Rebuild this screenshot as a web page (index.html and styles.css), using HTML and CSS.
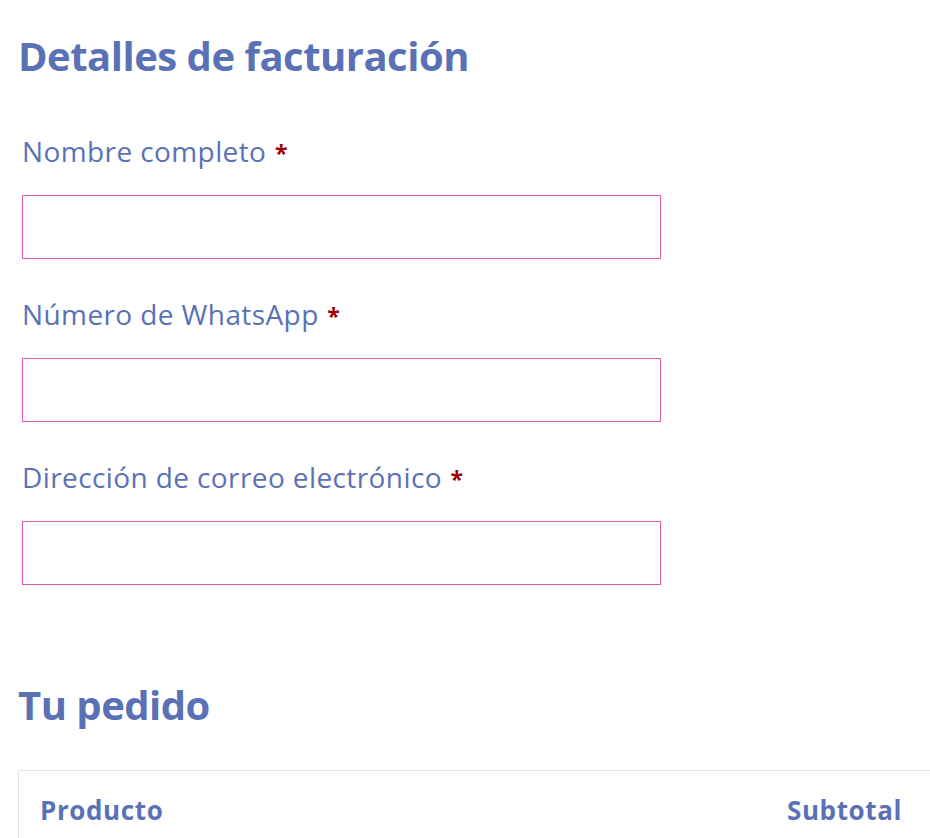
FILE: index.html
```html
<!DOCTYPE html>
<html lang="es">
<head>
<meta charset="utf-8">
<link rel="stylesheet" href="styles.css">
<title>Checkout</title>
</head>
<body>
<div class="page">
  <h3 class="title">Detalles de facturación</h3>
  <div class="fields">
    <div class="field">
      <label class="label">Nombre completo <abbr class="req">*</abbr></label>
      <input class="input" type="text">
    </div>
    <div class="field">
      <label class="label">Número de WhatsApp <abbr class="req">*</abbr></label>
      <input class="input" type="text">
    </div>
    <div class="field">
      <label class="label">Dirección de correo electrónico <abbr class="req">*</abbr></label>
      <input class="input" type="email">
    </div>
  </div>
  <h3 class="title order-title">Tu pedido</h3>
  <div class="table">
    <div class="thead">
      <span class="th">Producto</span>
      <span class="th">Subtotal</span>
    </div>
  </div>
</div>
</body>
</html>
```
FILE: styles.css
```css
html, body {
  margin: 0;
  padding: 0;
  background: #ffffff;
  overflow: hidden;
}
body {
  font-family: "Open Sans", "Noto Sans", sans-serif;
  color: #5a72b5;
}
.page {
  padding: 34px 0 0 18px;
}
.title {
  margin: 0;
  font-size: 40px;
  line-height: 44px;
  font-weight: 700;
  color: #5a72b5;
  letter-spacing: -0.5px;
}
.fields {
  padding: 52px 0 0 4px;
  display: flex;
  flex-direction: column;
  gap: 34px;
}
.field {
  display: flex;
  flex-direction: column;
  gap: 23px;
}
.label {
  font-size: 28px;
  line-height: 42px;
  height: 42px;
  letter-spacing: 0.4px;
  color: #5a72b5;
}
.req {
  color: #a00000;
  font-weight: 700;
  font-size: 23px;
  line-height: 1;
  margin-left: 1px;
  text-decoration: none;
  border: 0;
}
.input {
  box-sizing: border-box;
  width: 639px;
  height: 64px;
  margin: 0;
  border: 1px solid #e05ca8;
  background: #fff;
  outline: none;
}
.order-title {
  margin-top: 98px;
}
.table {
  margin-top: 43px;
  border-top: 1px solid #e4e4e4;
  border-left: 1px solid #e4e4e4;
  margin-right: -10px;
}
.thead {
  display: flex;
  justify-content: space-between;
  padding: 22px 38px 0 21px;
  height: 60px;
}
.th {
  font-size: 26px;
  font-weight: 700;
  line-height: 34px;
  letter-spacing: 0.6px;
  color: #5a72b5;
}
```
